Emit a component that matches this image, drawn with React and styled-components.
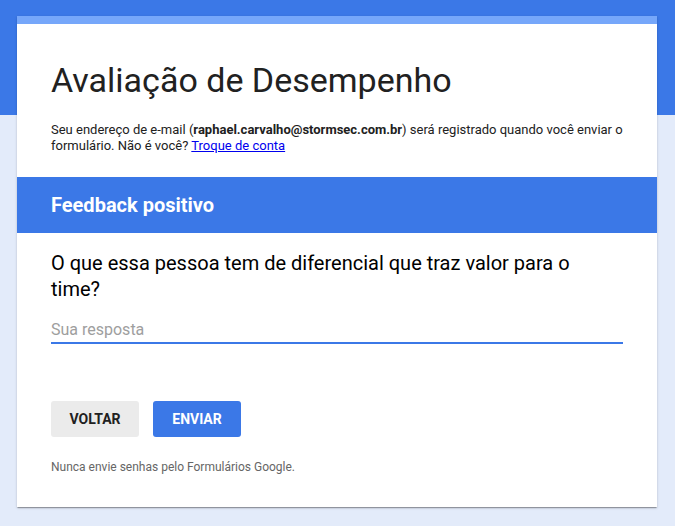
import React, { useState } from "react";
import styled, { createGlobalStyle } from "styled-components";

const blue = "#3b78e7";

const GlobalStyle = createGlobalStyle`
  html, body {
    margin: 0;
    padding: 0;
  }
  body {
    font-family: Roboto, "Liberation Sans", Arial, sans-serif;
    background: #e3ebfa;
  }
`;

// blue band on top, light page below it
const Page = styled.div`
  min-height: 526px;
  padding: 16px 0 19px;
  box-sizing: border-box;
  background: linear-gradient(${blue} 0, ${blue} 115px, #e3ebfa 115px);
`;

const Card = styled.div`
  width: 640px;
  margin: 0 18px 0 17px;
  background: #fff;
  border-top: 8px solid #76a7fa;
  box-shadow: 0 2px 1px -1px rgba(0, 0, 0, 0.2), 0 1px 1px 0 rgba(0, 0, 0, 0.14),
    0 1px 3px 0 rgba(0, 0, 0, 0.12);
`;

const Header = styled.div`
  padding: 36px 34px 23px;
`;

const Title = styled.h1`
  margin: 0;
  font-size: 34px;
  font-weight: 400;
  line-height: 40px;
  color: #212121;
`;

const Notice = styled.p`
  margin: 22px 0 0;
  font-size: 13px;
  line-height: 16px;
  color: #212121;

  b {
    font-weight: 700;
  }

  a {
    color: #0000ee;
    text-decoration: underline;
  }
`;

const SectionBar = styled.div`
  height: 56px;
  display: flex;
  align-items: center;
  padding: 0 34px;
  background: ${blue};
  color: #fff;
  font-size: 20px;
  font-weight: 700;
`;

const Body = styled.div`
  padding: 17px 34px 32px;
`;

const Question = styled.div`
  font-size: 20px;
  line-height: 26px;
  color: #000;
`;

const Answer = styled.input`
  display: block;
  width: 100%;
  box-sizing: border-box;
  margin-top: 18px;
  padding: 0 0 3px;
  border: none;
  border-bottom: 2px solid ${blue};
  outline: none;
  font-family: inherit;
  font-size: 16px;
  line-height: 19px;
  height: 24px;
  color: #212121;

  &::placeholder {
    color: #9e9e9e;
  }
`;

const Actions = styled.div`
  display: flex;
  gap: 14px;
  margin-top: 57px;
`;

const Button = styled.button`
  width: 88px;
  height: 36px;
  border: none;
  border-radius: 3px;
  font-family: inherit;
  font-size: 14px;
  font-weight: 700;
  text-transform: uppercase;
  cursor: pointer;
  background: ${(p) => (p.$primary ? blue : "#ebebeb")};
  color: ${(p) => (p.$primary ? "#fff" : "#212121")};
`;

const Footnote = styled.div`
  margin-top: 22px;
  font-size: 12px;
  line-height: 16px;
  color: #666;
`;

const App = () => {
  const [answer, setAnswer] = useState("");

  return (
    <>
      <GlobalStyle />
      <Page>
        <Card>
          <Header>
            <Title>Avaliação de Desempenho</Title>
            <Notice>
              Seu endereço de e-mail (<b>raphael.carvalho@stormsec.com.br</b>) será registrado
              quando você enviar o formulário. Não é você? <a href="#">Troque de conta</a>
            </Notice>
          </Header>
          <SectionBar>Feedback positivo</SectionBar>
          <Body>
            <Question>O que essa pessoa tem de diferencial que traz valor para o time?</Question>
            <Answer
              type="text"
              placeholder="Sua resposta"
              value={answer}
              onChange={(e) => setAnswer(e.target.value)}
            />
            <Actions>
              <Button>Voltar</Button>
              <Button $primary>Enviar</Button>
            </Actions>
            <Footnote>Nunca envie senhas pelo Formulários Google.</Footnote>
          </Body>
        </Card>
      </Page>
    </>
  );
};

export default App;
